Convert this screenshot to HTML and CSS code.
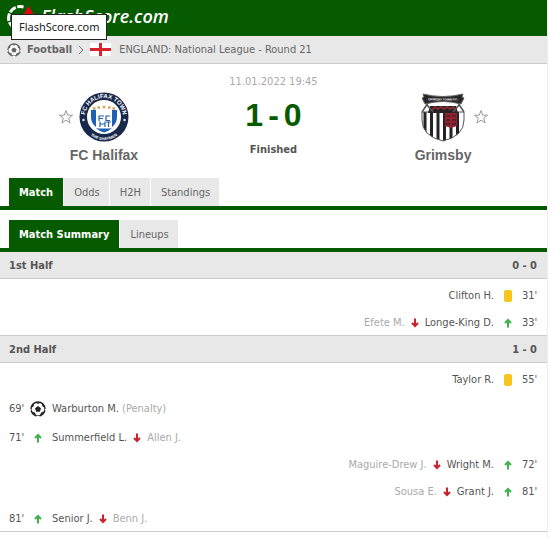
FILE: index.html
```
<!DOCTYPE html>
<html lang="en">
<head>
<meta charset="utf-8">
<title>FC Halifax - Grimsby</title>
<link rel="stylesheet" href="styles.css">
</head>
<body>
<svg class="sprite" aria-hidden="true">
  <symbol id="ball" viewBox="0 0 16 16">
    <circle cx="8" cy="8" r="7" fill="#fff" stroke="currentColor" stroke-width="1.500"/>
    <path fill="currentColor" d="M8 5l3 2.200-1.150 3.500h-3.700L5 7.200zM5.300 1.400h5.400L8 3.100zM1 6.800l1.100-2.900 2-1.700-.5 3.200zM15 6.800l-1.100-2.900-2-1.700.5 3.200zM2.200 10.800l2.700.6 1.100 2.900-2.400-1.200zM13.800 10.800l-2.700.6-1.100 2.900 2.400-1.200z"/>
    <path d="M6.500 15.500h3M.5 8v1.500M15.500 8v1.500" stroke="#fff" stroke-width="1.500"/>
  </symbol>
  <symbol id="up" viewBox="0 0 8 10"><path d="M4 9.500V2M1 5l3-3 3 3" fill="none" stroke="#3fb24a" stroke-width="2"/></symbol>
  <symbol id="down" viewBox="0 0 8 10"><path d="M4 .5V8M1 5l3 3 3-3" fill="none" stroke="#c8232c" stroke-width="2"/></symbol>
  <symbol id="star" viewBox="0 0 16 16"><path d="M8 1.500l1.700 4.700h4.900l-3.900 3 1.400 4.800L8 11.200 3.900 14l1.400-4.800-3.900-3h4.900z" fill="#fff" stroke="#999"/></symbol>
</svg>
<div class="page">
  <header class="top">
    <a class="brand" href="#">
      <svg class="brand-mark" viewBox="0 0 30 30" aria-hidden="true">
        <circle cx="14" cy="15" r="11.500" fill="none" stroke="#fff" stroke-width="3" stroke-dasharray="7.500 1.500" stroke-dashoffset="3"/>
        <path d="M15 15l3-13h11v13z" fill="#065b00"/><path d="M17 12l5.500-9 5.500 9z" fill="#e30613"/>
      </svg>
      <span class="brand-name">FlashScore.com</span>
    </a>
    <span class="tooltip" role="tooltip">FlashScore.com</span>
  </header>
  <nav class="crumbs">
    <svg class="crumb-ball"><use href="#ball"/></svg>
    <a class="sport" href="#">Football</a>
    <svg class="chevron" viewBox="0 0 6 10"><path d="M1 1l4 4-4 4" fill="none" stroke="#777"/></svg>
    <svg class="flag" viewBox="0 0 21 13"><path fill="#fff" d="M0 0h21v13H0z"/><path fill="#d8232f" d="M0 5h21v3H0zM9 0h3v13H9z"/></svg>
    <a href="#">ENGLAND: National League - Round 21</a>
  </nav>
  <main>
    <section class="duel">
      <div class="team">
        <div class="team-row">
          <button class="fav" aria-label="Add FC Halifax to favourites"><svg><use href="#star"/></svg></button>
          <svg class="crest" viewBox="0 0 50 50" aria-label="FC Halifax Town">
            <circle cx="25" cy="25" r="24.500" fill="#18284a"/>
            <circle cx="25" cy="25" r="17" fill="#fff"/>
            <path id="arcTop" d="M6 25a19 19 0 0 1 38 0" fill="none"/>
            <path id="arcLow" d="M3 26a22 22 0 0 0 44 0" fill="none"/>
            <text class="crest-text"><textPath href="#arcTop" startOffset="50%">FC HALIFAX TOWN</textPath></text>
            <text class="crest-small"><textPath href="#arcLow" startOffset="50%">THE SHAYMEN</textPath></text>
            <circle cx="4.500" cy="28" r="1.300" fill="#cfd6e4"/><circle cx="45.500" cy="28" r="1.300" fill="#cfd6e4"/>
            <path d="M12 18h5v17q-5-4-5-10zM38 18h-5v17q5-4 5-10z" fill="#1e60b5"/>
            <path d="M17 36q3 3 8 4.500 5-1.500 8-4.500l-3 .5H20z" fill="#1e60b5"/>
            <path d="M20 29v-5h5M20 26.500h4M31 24h-4v4.500h4M21 35v-5.500M26 35v-5.500M21 32h5M27 30h5M29.500 30v5" fill="none" stroke="#245eab" stroke-width="1.200"/>
            <path d="M14 16.500h2.500M18.500 15.500H21M23.700 15h2.600M29 15.500h2.500M33.500 16.500H36" stroke="#d2a35b" stroke-width="2.500"/>
          </svg>
        </div>
        <a class="team-name" href="#">FC Halifax</a>
      </div>
      <div class="result">
        <time>11.01.2022 19:45</time>
        <div class="score"><span>1</span><span>-</span><span>0</span></div>
        <div class="status">Finished</div>
      </div>
      <div class="team">
        <div class="team-row away">
          <svg class="crest" viewBox="0 0 50 50" aria-label="Grimsby Town">
            <defs><clipPath id="shield"><path d="M4 20h42v8q0 16-21 21Q4 44 4 28z"/></clipPath></defs>
            <g clip-path="url(#shield)">
              <path fill="#fff" d="M4 18h42v32H4z"/>
              <path stroke="#252225" stroke-width="3" d="M7 20v30M13.500 20v30M20 20v30M26.500 20v30M33 20v30M39.500 20v30"/>
              <path fill="#8e2230" d="M27 20h12v14l-6 2-6-2z"/>
              <path stroke="#35181d" stroke-width="1.200" d="M28 24h4m2 0h4M28 28h4m2 0h4M28 32h4m2 0h4"/>
            </g>
            <path d="M4 20h42v8q0 16-21 21Q4 44 4 28z" fill="none" stroke="#555"/>
            <path d="M12 14h26l2 7H10z" fill="#262326"/>
            <path d="M14 18l3-3 3 2 3-2 3 2 3-2 3 2 3-2 3 4" fill="none" stroke="#a12835" stroke-width="1.500"/>
            <path d="M10 11L4 20M9 13l6 7M40 11l6 9M41 13l-6 7" stroke="#555" stroke-width="1.500"/>
            <path d="M5 2q20 5 40 0l-1 3 2 1-3 6q-18-5-36 0L4 6l2-1z" fill="#292629" stroke="#666"/>
            <path id="ribbon" d="M6 8q19 1 38 0" fill="none"/>
            <text class="crest-ribbon"><textPath href="#ribbon" startOffset="50%">GRIMSBY TOWN F.C.</textPath></text>
          </svg>
          <button class="fav" aria-label="Add Grimsby to favourites"><svg><use href="#star"/></svg></button>
        </div>
        <a class="team-name" href="#">Grimsby</a>
      </div>
    </section>
    <nav class="tabs">
      <a class="active" href="#">Match</a><a href="#">Odds</a><a href="#">H2H</a><a href="#">Standings</a>
    </nav>
    <nav class="tabs">
      <a class="active" href="#">Match Summary</a><a href="#">Lineups</a>
    </nav>
    <section class="period">
      <h2>1st Half <span>0 - 0</span></h2>
      <ul>
        <li class="away"><span class="min">31'</span><i class="icon"><b class="card"></b></i><span>Clifton H.</span></li>
        <li class="away"><span class="min">33'</span><i class="icon"><svg class="arrow"><use href="#up"/></svg></i><span>Longe-King D.</span><svg class="arrow"><use href="#down"/></svg><span class="muted">Efete M.</span></li>
      </ul>
    </section>
    <section class="period">
      <h2>2nd Half <span>1 - 0</span></h2>
      <ul>
        <li class="away"><span class="min">55'</span><i class="icon"><b class="card"></b></i><span>Taylor R.</span></li>
        <li class="goal"><span class="min">69'</span><i class="icon"><svg class="ball"><use href="#ball"/></svg></i><span>Warburton M. <span class="muted">(Penalty)</span></span></li>
        <li><span class="min">71'</span><i class="icon"><svg class="arrow"><use href="#up"/></svg></i><span>Summerfield L.</span><svg class="arrow"><use href="#down"/></svg><span class="muted">Allen J.</span></li>
        <li class="away"><span class="min">72'</span><i class="icon"><svg class="arrow"><use href="#up"/></svg></i><span>Wright M.</span><svg class="arrow"><use href="#down"/></svg><span class="muted">Maguire-Drew J.</span></li>
        <li class="away"><span class="min">81'</span><i class="icon"><svg class="arrow"><use href="#up"/></svg></i><span>Grant J.</span><svg class="arrow"><use href="#down"/></svg><span class="muted">Sousa E.</span></li>
        <li><span class="min">81'</span><i class="icon"><svg class="arrow"><use href="#up"/></svg></i><span>Senior J.</span><svg class="arrow"><use href="#down"/></svg><span class="muted">Benn J.</span></li>
      </ul>
    </section>
  </main>
</div>
</body>
</html>
```
FILE: styles.css
```
* { box-sizing: border-box; }
html { background: #fff; }
body {
  margin: 0;
  color: #555;
  font: 11px/14px Tahoma, "DejaVu Sans Condensed", "Noto Sans", sans-serif;
}
a { color: inherit; text-decoration: none; }
svg { display: block; flex: none; }
.sprite { position: absolute; width: 0; height: 0; }
.page { min-height: 100vh; border-right: 1px solid #eee; }

.top { position: relative; height: 36px; background: #065b00; }
.brand { display: flex; align-items: center; gap: 5px; height: 32px; padding-left: 6px; color: #fff; }
.brand-mark { width: 30px; height: 30px; margin-top: 4px; }
.brand-name { font: italic 600 18px/24px "Open Sans", sans-serif; }
.tooltip {
  position: absolute; left: 11px; top: 14px; z-index: 1;
  padding: 3px 7px; border: 1px solid #222;
  background: #fff; color: #222;
  font: 11px/18px "Noto Sans", "Open Sans", sans-serif;
}

.crumbs {
  display: flex; align-items: center; gap: 6px;
  height: 28px; padding-left: 7px;
  border-bottom: 1px solid #ccc; background: #e8e8e8; color: #666;
}
.crumb-ball { width: 14px; height: 14px; }
.sport { font-weight: bold; }
.chevron { width: 6px; height: 10px; }
.flag { width: 21px; height: 13px; margin-right: 2px; }

.duel { display: grid; grid-template-columns: 38% 24% 38%; height: 114px; text-align: center; }
.team { display: flex; flex-direction: column; align-items: center; padding-top: 28px; }
.team-row { display: flex; align-items: center; gap: 5px; padding-right: 21px; }
.team-row.away { padding: 0 0 0 21px; }
.crest { width: 50px; height: 50px; overflow: visible; }
.crest-text, .crest-small, .crest-ribbon { fill: #fff; font-family: "Liberation Sans", sans-serif; font-weight: bold; text-anchor: middle; }
.crest-text { font-size: 6px; }
.crest-small { font-size: 4px; }
.crest-ribbon { font-size: 3px; }
.fav { padding: 0; border: 0; background: none; }
.fav svg { width: 16px; height: 16px; }
.team-name { margin-top: 5px; color: #666; font: bold 14px/16px "Liberation Sans", sans-serif; }
.result { padding-top: 11px; }
.result time { display: block; color: #aaa; }
.score { display: flex; justify-content: center; gap: 5px; margin-top: 7px; color: #065b00; font: bold 32px/38px "Liberation Sans", sans-serif; }
.status { margin-top: 9px; font-weight: bold; }

.tabs { display: flex; gap: 1px; padding-left: 9px; border-bottom: 4px solid #065b00; }
.tabs + .tabs { margin-top: 10px; }
.tabs a { padding: 8px 9px 6px 10px; background: #e8e8e8; color: #666; }
.tabs .active { padding-right: 10px; background: #065b00; color: #fff; font-weight: bold; }

.period h2 {
  display: flex; justify-content: space-between; align-items: center;
  height: 27px; margin: 0; padding: 2px 10px 0 9px;
  border-bottom: 1px solid #ccc; background: #e8e8e8;
  font-size: 11px; line-height: 14px;
}
.period ul {
  display: flex; flex-direction: column; gap: 4px;
  margin: 0; padding: 5px 10px 1px 9px;
  border-bottom: 1px solid #ccc; list-style: none;
}
.period li { display: flex; align-items: center; gap: 6px; min-height: 23px; }
.period li.goal { min-height: 27px; }
.period li.away { flex-direction: row-reverse; }
.min { width: 15px; }
.icon { display: flex; justify-content: center; width: 16px; }
.arrow { width: 8px; height: 10px; }
.ball { width: 16px; height: 16px; color: #222; }
.card { width: 8px; height: 12px; border-radius: 2px; background: #f8c51c; }
.muted { color: #aaa; }
```
